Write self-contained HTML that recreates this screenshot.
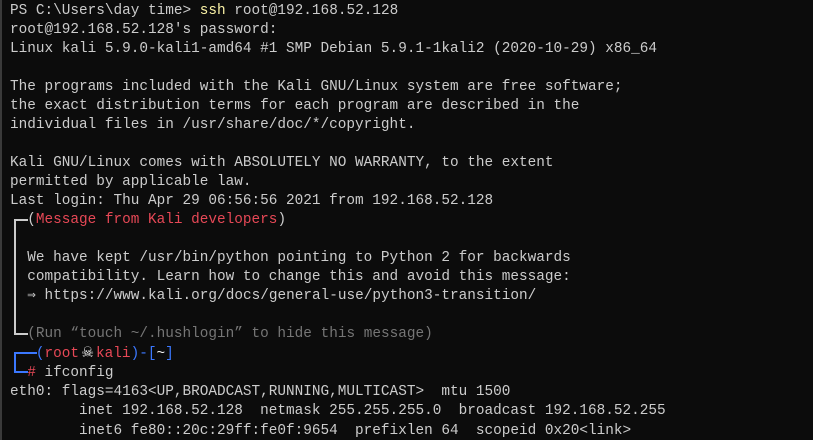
<!DOCTYPE html>
<html><head><style>
html,body{margin:0;padding:0;background:#0c0c0c;width:813px;height:440px;overflow:hidden;position:relative}
pre{margin:0;padding:1.5px 0 0 10px;font-family:"Liberation Mono","DejaVu Sans Mono",monospace;font-size:14.38px;line-height:19.05px;color:#cccccc;white-space:pre}
.y{color:#f9f1a5}.r{color:#e74856}.g{color:#767676}.b{color:#3b78ff}.w{color:#f2f2f2}
.sk{display:inline-block;width:17px;text-align:center;color:#f2f2f2;font-family:"DejaVu Sans",sans-serif}
.l{position:absolute;background:#cccccc}
.bl{position:absolute;background:#3b78ff}
.edge{position:absolute;left:0;top:0;width:2px;height:440px;background:#3a3a3a}
</style></head><body>
<div class="edge"></div>
<pre>PS C:\Users\day time&gt; <span class="y">ssh</span> root@192.168.52.128
root@192.168.52.128's password:
Linux kali 5.9.0-kali1-amd64 #1 SMP Debian 5.9.1-1kali2 (2020-10-29) x86_64

The programs included with the Kali GNU/Linux system are free software;
the exact distribution terms for each program are described in the
individual files in /usr/share/doc/*/copyright.

Kali GNU/Linux comes with ABSOLUTELY NO WARRANTY, to the extent
permitted by applicable law.
Last login: Thu Apr 29 06:56:56 2021 from 192.168.52.128
  (<span class="r">Message from Kali developers</span>)

  We have kept /usr/bin/python pointing to Python 2 for backwards
  compatibility. Learn how to change this and avoid this message:
  ⇒ https://www.kali.org/docs/general-use/python3-transition/

  <span class="g">(Run “touch ~/.hushlogin” to hide this message)</span>
   <span class="b">(</span><span class="r">root</span><span class="sk">☠</span><span class="r">kali</span><span class="b">)-[</span><span class="w">~</span><span class="b">]</span>
  <span class="r">#</span> ifconfig
eth0: flags=4163&lt;UP,BROADCAST,RUNNING,MULTICAST&gt;  mtu 1500
        inet 192.168.52.128  netmask 255.255.255.0  broadcast 192.168.52.255
        inet6 fe80::20c:29ff:fe0f:9654  prefixlen 64  scopeid 0x20&lt;link&gt;
</pre>
<div class="l" style="left:14px;top:220px;width:2px;height:115px"></div>
<div class="l" style="left:14px;top:219px;width:14px;height:2px"></div>
<div class="l" style="left:14px;top:333px;width:14px;height:2px"></div>
<div class="bl" style="left:14px;top:353px;width:2px;height:20px"></div>
<div class="bl" style="left:14px;top:352px;width:23px;height:2px"></div>
<div class="bl" style="left:14px;top:371px;width:14px;height:2px"></div>
</body></html>
